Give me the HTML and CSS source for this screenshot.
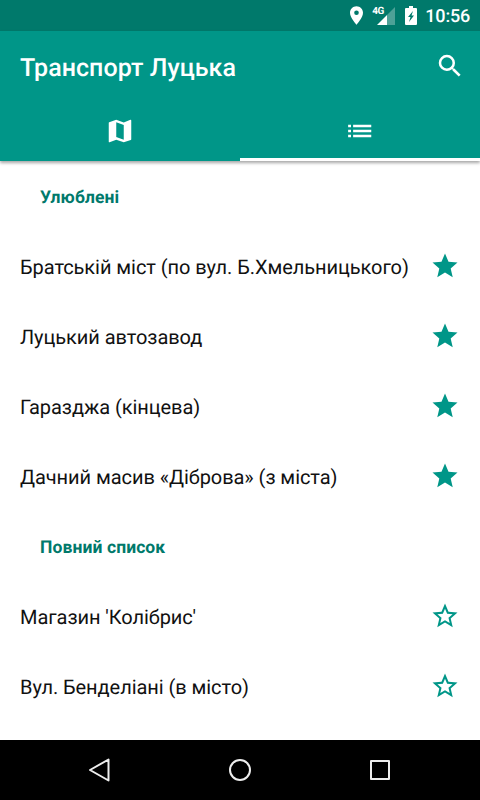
FILE: index.html
```
<!DOCTYPE html>
<html lang="uk">
<head>
    <meta charset="UTF-8">
    <meta name="viewport" content="width=device-width, initial-scale=1.0">
    <title>Транспорт Луцька</title>
    <link rel="stylesheet" href="styles.css">
</head>
<body>

    <div class="status-bar">
        <svg class="pin" viewBox="5 2 14 20"><path d="M12 2C8.13 2 5 5.13 5 9c0 5.25 7 13 7 13s7-7.75 7-13c0-3.87-3.13-7-7-7zm0 9.500a2.500 2.500 0 1 1 0-5 2.500 2.500 0 0 1 0 5z"/></svg>
        <div class="network">
            <span>4G</span>
            <svg viewBox="0 0 18 18"><path class="dim" d="M10 8l8-8v18h-8z"/><path d="M0 18h10V8z"/></svg>
        </div>
        <svg class="battery" viewBox="0 0 12 19"><path fill-rule="evenodd" d="M4 0h4v2h3q1 0 1 1v15q0 1-1 1H1q-1 0-1-1V3q0-1 1-1h3zM8 5l-5 6h2.500l-1.500 5 5-6.500H6.500z"/></svg>
        <span class="clock">10:56</span>
    </div>

    <div class="app-bar">
        <div class="toolbar">
            <h1 class="title">Транспорт Луцька</h1>
            <svg class="search" viewBox="0 0 24 24"><path d="M15.500 14h-.79l-.28-.27A6.470 6.470 0 0 0 16 9.500 6.500 6.500 0 1 0 9.500 16c1.610 0 3.090-.59 4.230-1.570l.27.28v.79l5 4.990L20.490 19l-4.990-5zm-6 0a4.500 4.500 0 1 1 0-9 4.500 4.500 0 0 1 0 9z"/></svg>
        </div>
        <div class="tabs">
            <div class="tab">
                <svg viewBox="0 0 24 24"><path d="M20.500 3l-.16.030L15 5.100 9 3 3.360 4.900c-.21.070-.36.250-.36.480V20.500c0 .28.220.5.5.5l.16-.030L9 18.900l6 2.100 5.640-1.900c.21-.070.36-.250.36-.480V3.500c0-.28-.220-.5-.5-.5zM15 19l-6-2.110V5l6 2.110V19z"/></svg>
            </div>
            <div class="tab active">
                <svg viewBox="0 0 24 24"><path d="M2.500 13h2.300v-2H2.500v2zm0 4h2.300v-2H2.500v2zm0-8h2.300V7H2.500v2zm4 4h14.500v-2H6.500v2zm0 4h14.500v-2H6.500v2zM6.500 7v2h14.500V7H6.500z"/></svg>
            </div>
        </div>
    </div>

    <!-- Star shapes shared by the rows -->
    <svg class="defs">
        <symbol id="star" viewBox="0 0 24 24"><path d="M12 17.270L18.180 21l-1.640-7.030L22 9.240l-7.190-.61L12 2 9.190 8.630 2 9.240l5.460 4.730L5.820 21z"/></symbol>
        <symbol id="star-empty" viewBox="0 0 24 24"><path d="M22 9.240l-7.190-.62L12 2 9.190 8.630 2 9.240l5.460 4.730L5.820 21 12 17.270 18.180 21l-1.630-7.030L22 9.240zM12 15.400l-3.760 2.270 1-4.280-3.320-2.880 4.380-.38L12 6.100l1.710 4.040 4.380.38-3.320 2.880 1 4.280L12 15.400z"/></symbol>
    </svg>

    <div class="list">
        <div class="section">Улюблені</div>
        <div class="row"><span>Братській міст (по вул. Б.Хмельницького)</span><svg class="star"><use href="#star"/></svg></div>
        <div class="row"><span>Луцький автозавод</span><svg class="star"><use href="#star"/></svg></div>
        <div class="row"><span>Гаразджа (кінцева)</span><svg class="star"><use href="#star"/></svg></div>
        <div class="row"><span>Дачний масив «Діброва» (з міста)</span><svg class="star"><use href="#star"/></svg></div>
        <div class="section">Повний список</div>
        <div class="row"><span>Магазин 'Колібрис'</span><svg class="star"><use href="#star-empty"/></svg></div>
        <div class="row"><span>Вул. Бенделіані (в місто)</span><svg class="star"><use href="#star-empty"/></svg></div>
    </div>

    <div class="nav-bar">
        <svg viewBox="0 0 24 24"><path d="M20.500 1.500v21L2 12z"/></svg>
        <svg viewBox="0 0 24 24"><circle cx="12" cy="12" r="10"/></svg>
        <svg viewBox="0 0 24 24"><rect x="3" y="3" width="18" height="18"/></svg>
    </div>

</body>
</html>
```
FILE: styles.css
```
body {
    display: flex;
    flex-direction: column;
    height: 800px;
    margin: 0;
    overflow: hidden;
    background-color: #ffffff;
    font-family: Roboto, sans-serif;
    text-rendering: geometricPrecision;
}
.status-bar {
    display: flex;
    align-items: center;
    justify-content: flex-end;
    box-sizing: border-box;
    height: 31px;
    padding-right: 10px;
    background-color: #00796b;
    color: #ffffff;
}
.status-bar svg {
    fill: #ffffff;
}
.pin {
    width: 13px;
    height: 19px;
    margin-right: 9px;
}
.network {
    display: flex;
    align-items: flex-start;
    width: 23px;
    height: 19px;
    margin-right: 10px;
}
.network span {
    width: 5px;
    font-size: 10px;
    font-weight: bold;
    letter-spacing: -0.5px;
    line-height: 11px;
}
.network svg {
    flex: none;
    width: 18px;
    height: 18px;
    margin-top: 1px;
}
.network .dim {
    opacity: 0.3;
}
.battery {
    width: 12px;
    height: 19px;
    margin-right: 8px;
}
.clock {
    margin-top: 2px;
    font-size: 18px;
    font-weight: 500;
    letter-spacing: -0.2px;
}
.app-bar {
    height: 130px;
    background-color: #009688;
    box-shadow: 0 2px 3px rgba(0, 0, 0, 0.35);
}
.toolbar {
    display: flex;
    align-items: center;
    justify-content: space-between;
    height: 70px;
    padding: 0 15px 0 20px;
}
.title {
    margin: 5px 0 0;
    color: #ffffff;
    font-size: 25px;
    font-weight: 500;
    letter-spacing: 0.05px;
}
.search {
    width: 30px;
    height: 30px;
    fill: #ffffff;
}
.tabs {
    display: flex;
    height: 60px;
}
.tab {
    display: flex;
    flex: 1;
    align-items: center;
    justify-content: center;
    box-sizing: border-box;
    padding-top: 3px;
    border-bottom: 3px solid transparent;
}
.tab.active {
    border-bottom-color: #ffffff;
}
.tab svg {
    width: 30px;
    height: 30px;
    fill: #ffffff;
}
.defs {
    position: absolute;
    width: 0;
    height: 0;
}
.list {
    flex: 1;
    padding-top: 1px;
}
.section,
.row {
    display: flex;
    align-items: center;
    height: 70px;
}
.section {
    box-sizing: border-box;
    padding: 2px 0 0 40px;
    color: #00796b;
    font-size: 17.500px;
    font-weight: bold;
    letter-spacing: 0.1px;
}
.row {
    justify-content: space-between;
    padding: 0 20px;
    color: #111111;
    font-size: 20px;
    letter-spacing: -0.06px;
}
.star {
    width: 30px;
    height: 30px;
    margin-bottom: 2px;
    fill: #009688;
}
.nav-bar {
    display: flex;
    align-items: center;
    justify-content: center;
    gap: 116px;
    height: 60px;
    background-color: #000000;
}
.nav-bar svg {
    width: 24px;
    height: 24px;
    fill: none;
    stroke: #eeeeee;
    stroke-width: 2;
    stroke-linejoin: round;
}
```
